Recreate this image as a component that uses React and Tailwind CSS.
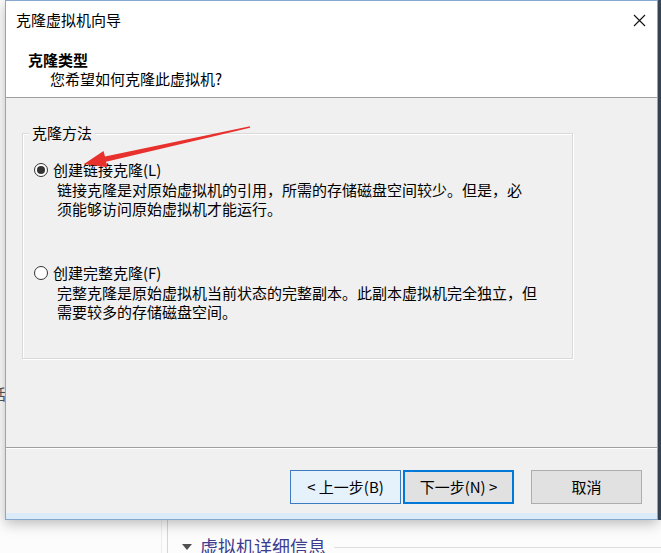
import React from "react";

const font = { fontFamily: '"Noto Sans CJK SC", "Noto Sans", sans-serif' };

function Radio({ checked }) {
  return (
    <span className="w-[14px] h-[14px] rounded-full border border-[#333] bg-white flex items-center justify-center shrink-0">
      {checked && <span className="w-[8px] h-[8px] rounded-full bg-[#333]" />}
    </span>
  );
}

function Option({ checked, label, lines }) {
  return (
    <div className="flex flex-col">
      <div className="flex items-center h-[20px] gap-[5px]">
        <Radio checked={checked} />
        <span className="leading-[20px]">{label}</span>
      </div>
      <div className="pl-[23px] leading-[19px]">
        {lines.map((l, i) => (
          <div key={i}>{l}</div>
        ))}
      </div>
    </div>
  );
}

export default function App() {
  return (
    <div className="relative w-[661px] h-[553px] overflow-hidden bg-[#fcfcfc] text-[15px] text-black" style={font}>
      {/* background application behind the dialog */}
      <div className="absolute inset-0">
        <div className="absolute left-[161px] top-0 bottom-0 w-px bg-[#ececec]" />
        <div className="absolute left-[167px] top-0 bottom-0 w-px bg-[#d4d4d4]" />
        <div className="absolute left-[-9px] top-[383px] text-[15px] text-[#555]">话</div>
        <div className="absolute left-[182px] top-[533px] flex items-center gap-[8px] w-[479px]">
          <svg width="10" height="8" viewBox="0 0 10 8" className="mt-[2px]">
            <polygon points="0,1 10,1 5,7" fill="#505050" />
          </svg>
          <span className="text-[18px] leading-[26px] text-[#3d3d8f] whitespace-nowrap">虚拟机详细信息</span>
          <div className="flex-1 h-px bg-[#dedede] mt-[2px]" />
        </div>
        <div className="absolute right-0 top-0 h-[520px] w-[3px] bg-[#3a4a5c]" />
      </div>

      {/* dialog */}
      <div className="absolute left-[5px] top-0 w-[653px] h-[520px] flex flex-col bg-[#f0f0f0] border border-[#86a8cf] shadow-[0_4px_12px_rgba(0,0,0,0.25)]">
        <div className="h-[38px] bg-white flex items-center justify-between pl-[10px] pr-[11px]">
          <span className="leading-[20px]">克隆虚拟机向导</span>
          <svg width="13" height="13" viewBox="0 0 13 13">
            <path d="M1 1 L12 12 M12 1 L1 12" stroke="#111" strokeWidth="1.1" fill="none" />
          </svg>
        </div>
        <div className="h-[59px] bg-white border-b border-[#a0a0a0] pt-[11px] flex flex-col">
          <div className="pl-[22px] font-bold leading-[19px]">克隆类型</div>
          <div className="pl-[44px] leading-[20px]">您希望如何克隆此虚拟机?</div>
        </div>

        <div className="h-[349px] flex flex-col">
          <div className="relative mt-[35px] ml-[16px] w-[551px] h-[226px] border border-[#d9d9d9] shadow-[inset_1px_1px_0_#fff,1px_1px_0_#fff] pt-[26px] pl-[11px] flex flex-col gap-[45px]">
            <span className="absolute left-[6px] top-[-11px] px-[3px] bg-[#f0f0f0] leading-[20px]">克隆方法</span>
            <Option
              checked
              label="创建链接克隆(L)"
              lines={["链接克隆是对原始虚拟机的引用，所需的存储磁盘空间较少。但是，必", "须能够访问原始虚拟机才能运行。"]}
            />
            <Option
              label="创建完整克隆(F)"
              lines={["完整克隆是原始虚拟机当前状态的完整副本。此副本虚拟机完全独立，但", "需要较多的存储磁盘空间。"]}
            />
          </div>
        </div>

        <div className="h-px bg-[#a0a0a0]" />
        <div className="h-px bg-white" />
        <div className="flex-1 flex justify-end items-start pt-[21px] pr-[15px] border-b-[6px] border-[#dcebf8]">
          <button className="w-[111px] h-[34px] border border-[#3d7bc0] bg-[#e5f1fb] flex items-center justify-center leading-[20px]">
            &lt; 上一步(B)
          </button>
          <button className="ml-[2px] w-[111px] h-[34px] border-2 border-[#0078d7] bg-[#e1e1e1] flex items-center justify-center leading-[20px]">
            下一步(N) &gt;
          </button>
          <button className="ml-[17px] w-[111px] h-[34px] border border-[#adadad] bg-[#e1e1e1] flex items-center justify-center leading-[20px]">
            取消
          </button>
        </div>
      </div>

      {/* red annotation arrow */}
      <svg className="absolute left-0 top-0 pointer-events-none" width="661" height="553" viewBox="0 0 661 553">
        <polygon
          points="250,126.3 105,156.6 103.5,151 84,164 107.5,167.3 106,161.8 250,127.7"
          fill="#e8302c"
        />
      </svg>
    </div>
  );
}
